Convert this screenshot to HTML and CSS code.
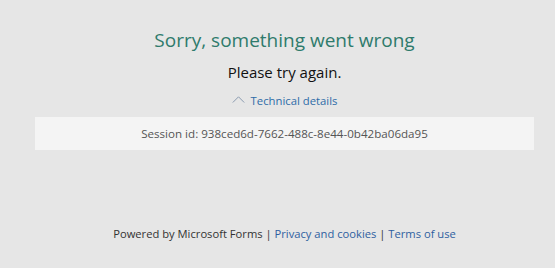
FILE: index.html
```html
<!DOCTYPE html>
<html lang="en">
<head>
<meta charset="utf-8">
<title>Microsoft Forms</title>
<link rel="stylesheet" href="styles.css">
</head>
<body>
<main class="page">
  <section class="error">
    <h1 class="title">Sorry, something went wrong</h1>
    <p class="subtitle">Please try again.</p>
    <button class="details-toggle" type="button">
      <svg class="chevron" width="13" height="7" viewBox="0 0 13 7" aria-hidden="true"><path d="M0.8 6.5 L6.5 0.8 L12.2 6.5" fill="none" stroke="#8a9bb0" stroke-width="1"/></svg>
      <span>Technical details</span>
    </button>
    <div class="session">Session id: 938ced6d-7662-488c-8e44-0b42ba06da95</div>
  </section>
  <footer class="footer">
    <span>Powered by Microsoft Forms</span> | <a href="#">Privacy and cookies</a> | <a href="#">Terms of use</a>
  </footer>
</main>
</body>
</html>
```
FILE: styles.css
```css
html, body {
  margin: 0;
  padding: 0;
  background: #e6e6e6;
}
body {
  font-family: "Open Sans", "Noto Sans", sans-serif;
  color: #222;
}
.page {
  box-sizing: border-box;
  width: 555px;
  height: 268px;
  padding-left: 14px;
  display: flex;
  flex-direction: column;
  align-items: center;
}
.error {
  display: flex;
  flex-direction: column;
  align-items: center;
  width: 100%;
  padding-top: 27px;
}
.title {
  margin: 0;
  font-weight: 400;
  font-size: 19px;
  line-height: 26px;
  color: #2f7b6c;
}
.subtitle {
  margin: 9px 0 0;
  font-size: 15px;
  line-height: 20px;
  color: #111;
}
.details-toggle {
  margin-top: 11px;
  display: flex;
  align-items: center;
  gap: 6px;
  background: none;
  border: 0;
  padding: 0;
  font-family: inherit;
  font-size: 11.3px;
  line-height: 16px;
  color: #2e6ca8;
}
.chevron {
  display: block;
  margin-top: -3px;
}
.session {
  box-sizing: border-box;
  margin-top: 8px;
  width: 499px;
  height: 33px;
  background: #f4f4f4;
  display: flex;
  align-items: center;
  justify-content: center;
  font-size: 11.6px;
  color: #555;
}
.footer {
  margin-top: 76px;
  font-size: 11.2px;
  color: #333;
}
.footer a {
  color: #2e5fa0;
  text-decoration: none;
}
```
